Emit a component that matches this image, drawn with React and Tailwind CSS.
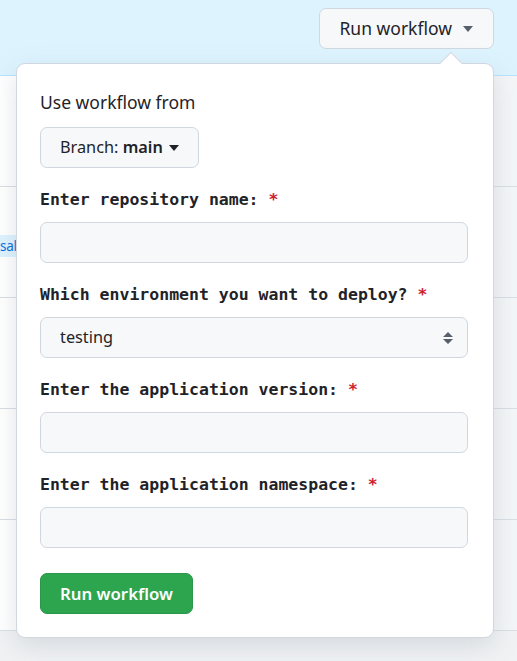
import React from 'react';

const Caret = ({ className = '' }) => (
    <svg width="10" height="6" viewBox="0 0 10 6" className={className}>
        <path d="M0 0h10L5 6z" fill="currentColor" />
    </svg>
);

const Field = ({ label, children }) => (
    <div className="flex flex-col">
        <label className="pt-[1px] font-['DejaVu_Sans_Mono',monospace] text-[16.5px] font-bold leading-[24px] text-[#1f2328] whitespace-pre">
            {label} <span className="text-[#cf222e]">*</span>
        </label>
        <div className="mt-[10px]">{children}</div>
    </div>
);

const TextBox = () => (
    <div className="h-[41px] w-full rounded-[7px] border border-[#d0d7de] bg-[#f6f8fa]" />
);

const App = () => {
    const rows = [0, 1, 2, 3, 4];

    return (
        <div className="relative h-[661px] w-[517px] overflow-hidden bg-white font-['Noto_Sans',sans-serif] text-[#1f2328]">
            {/* Top banner */}
            <div className="flex h-[76px] justify-end border-b border-[#b6e3ff] bg-[#ddf4ff] pr-[23px] pt-[8px]">
                <button className="flex h-[41px] items-center gap-[11px] rounded-[7px] border border-[#d0d7de] bg-[#f6f8fa] pl-[19px] pr-[20px] text-[17.5px] text-[#1f2328]">
                    Run workflow
                    <Caret className="text-[#57606a]" />
                </button>
            </div>

            {/* Background rows */}
            {rows.map((r) => (
                <div key={r} className="flex h-[111px] items-center border-b border-[#d8dee4] bg-gradient-to-r from-white to-[#f3f5f7]">
                    {r === 1 && (
                        <span className="mt-[8px] bg-[#ddf4ff] pr-[1px] text-[13.5px] leading-[22px] tracking-[-0.3px] text-[#0969da]">
                            sal
                        </span>
                    )}
                </div>
            ))}
            <div className="h-full bg-[#f0f2f4]" />

            {/* Popover */}
            <div className="absolute left-[16px] top-[63px] w-[478px] rounded-[9px] border border-[#d0d7de] bg-white pb-[23px] pl-[23px] pr-[25px] pt-[26px] shadow-[0_8px_24px_rgba(140,149,159,0.25)]">
                <div className="absolute right-[34px] top-[-9px] h-[16px] w-[16px] rotate-45 border-l border-t border-[#d0d7de] bg-white" />

                <p className="text-[17.5px] leading-[24px]">Use workflow from</p>

                <button className="mt-[13px] flex h-[41px] items-center gap-[6px] rounded-[7px] border border-[#d0d7de] bg-[#f6f8fa] pl-[19px] pr-[19px] text-[16.3px] text-[#1f2328]">
                    <span>
                        Branch: <span className="font-semibold">main</span>
                    </span>
                    <Caret className="text-[#1f2328]" />
                </button>

                <div className="mt-[19px] flex flex-col gap-[19px]">
                    <Field label="Enter repository name:">
                        <TextBox />
                    </Field>
                    <Field label="Which environment you want to deploy?">
                        <div className="flex h-[41px] w-full items-center justify-between rounded-[7px] border border-[#d0d7de] bg-[#f6f8fa] pl-[19px] pr-[13px] text-[16.3px]">
                            <span>testing</span>
                            <svg width="12" height="16" viewBox="0 0 12 16">
                                <path d="M6 2l5 5H1z M6 14l5-5H1z" fill="#57606a" />
                            </svg>
                        </div>
                    </Field>
                    <Field label="Enter the application version:">
                        <TextBox />
                    </Field>
                    <Field label="Enter the application namespace:">
                        <TextBox />
                    </Field>
                </div>

                <button className="mt-[25px] flex h-[41px] items-center rounded-[7px] border border-[#2c974b] bg-[#2da44e] px-[19px] text-[16.8px] font-semibold text-white">
                    Run workflow
                </button>
            </div>
        </div>
    );
};

export default App;
